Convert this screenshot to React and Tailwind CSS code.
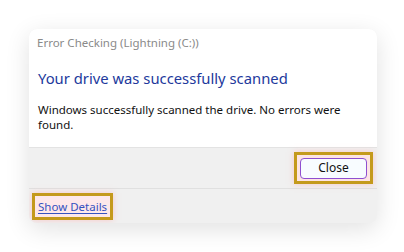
import React from 'react';

export default function App() {
  return (
    <div className="w-[404px] h-[252px] bg-white pl-[29px] pt-[29px]" style={{ fontFamily: '"Noto Sans", "Open Sans", sans-serif' }}>
      <div className="w-[348px] h-[194px] rounded-[8px] bg-[#f0f0f0] flex flex-col overflow-hidden shadow-[0_6px_24px_rgba(0,0,0,0.12)]">
        {/* main message */}
        <div className="h-[119px] bg-white px-[8px] pt-[6px] border-b border-[#e3e3e3]">
          <div className="text-[11.5px] leading-[16px] text-[#8a8a8a]">Error Checking (Lightning (C:))</div>
          <div className="mt-[17px] ml-[1px] text-[14.8px] leading-[20px] text-[#22399c]">Your drive was successfully scanned</div>
          <div className="mt-[14px] ml-[1px] text-[11.5px] leading-[15px] text-[#111]">
            Windows successfully scanned the drive. No errors were found.
          </div>
        </div>
        {/* button row */}
        <div className="h-[41px] flex items-center justify-end pr-[4px] border-b border-[#e0e0e0]">
          <div className="w-[79px] h-[32px] border-[3px] border-[#c49a1c] bg-[#fde4e4] flex items-center justify-center shadow-[0_0_6px_rgba(255,160,160,0.5)]">
            <button className="w-[67px] h-[21px] rounded-[4px] border border-[#8f4fd0] bg-[#f8fcff] text-[12px] leading-none text-[#111]">
              Close
            </button>
          </div>
        </div>
        {/* details row */}
        <div className="flex-1 pl-[3px] pt-[4px]">
          <div className="w-[81px] h-[27px] border-[3px] border-[#c49a1c] bg-[#fde8ea] flex items-center pl-[3px] shadow-[0_0_6px_rgba(255,160,160,0.5)]">
            <a href="#" className="whitespace-nowrap text-[11.5px] leading-none text-[#3552c0] underline underline-offset-2">Show Details</a>
          </div>
        </div>
      </div>
    </div>
  );
}
